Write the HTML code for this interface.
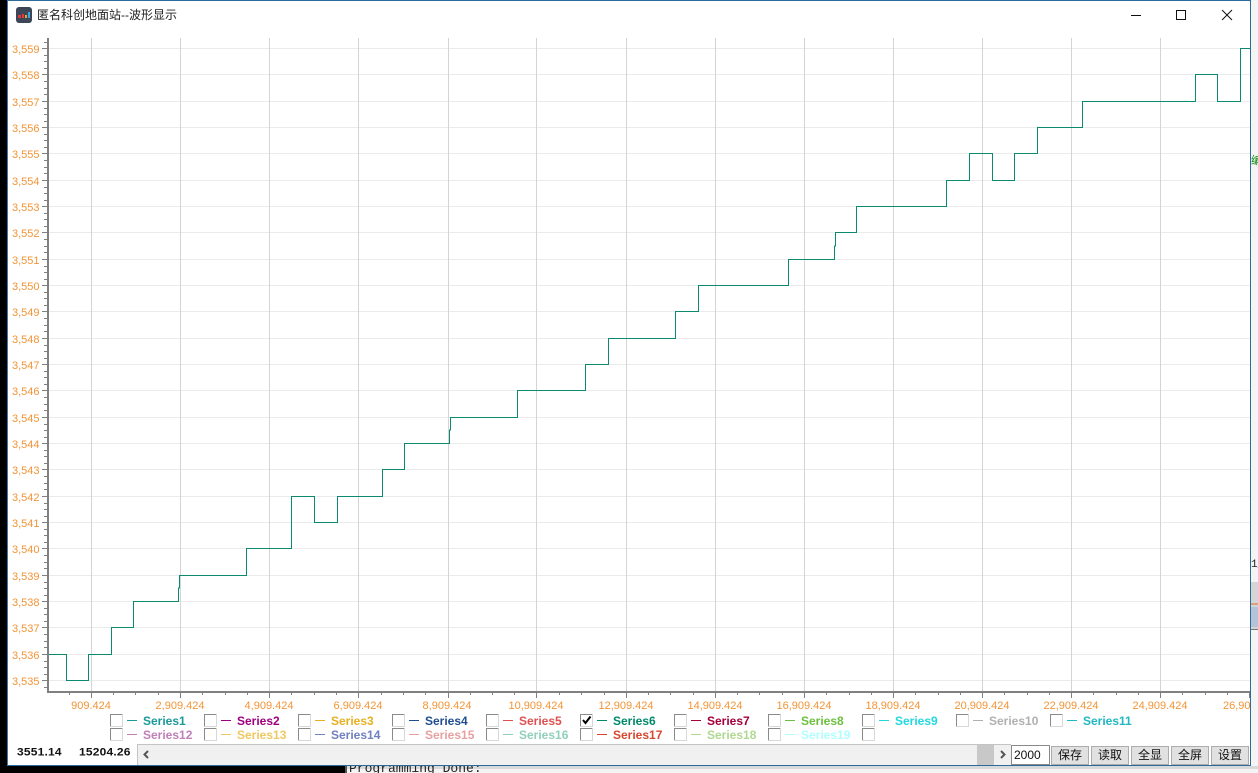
<!DOCTYPE html>
<html><head><meta charset="utf-8"><style>
html,body{margin:0;padding:0;background:#000;width:1258px;height:773px;overflow:hidden}
body{position:relative;font-family:"Liberation Sans","Noto Sans CJK SC",sans-serif}
div,span{position:absolute}
#win{left:7px;top:0;width:1244px;height:766px;background:#fff;box-sizing:border-box;border:1px solid #2c6a9e;border-left-color:#3a78aa}
svg{position:absolute;left:0;top:0}
.btn{top:746px;height:19px;width:38px;box-sizing:border-box;background:#e1e1e1;border:1px solid #adadad;font-size:12px;line-height:17px;text-align:center;color:#111}
</style></head><body>
<div style="left:345px;top:766px;width:913px;height:7px;background:#f4f4f4"></div>
<div style="left:345px;top:766px;width:913px;height:3px;background:#d9d9d9"></div>
<div style="left:345px;top:766px;width:2px;height:7px;background:#555"></div>
<div style="left:349px;top:760px;height:13px;width:300px;overflow:hidden;font:13px/13px 'Liberation Mono',monospace;color:#222;white-space:pre"><span style="top:2px;left:0">Programming Done:</span></div>
<div style="left:1251px;top:0;width:7px;height:766px;background:#f4f4f4"></div>
<div style="left:1251px;top:582px;width:7px;height:48px;background:#d5d5d5"></div>
<div style="left:1251px;top:603px;width:7px;height:2px;background:#d8a27c"></div>
<div style="left:1251px;top:607px;width:7px;height:20px;background:#b4c3d6"></div>
<div style="left:1251px;top:629px;width:7px;height:1px;background:#777"></div>
<div style="left:1251px;top:154px;width:7px;height:12px;font:11px/12px 'Noto Sans CJK SC',sans-serif;color:#0a8a0a;overflow:hidden;white-space:nowrap">编</div>
<div style="left:1251px;top:559px;width:7px;height:12px;font:11px/12px 'Liberation Mono',monospace;color:#222;overflow:hidden">1_</div>
<div id="win"></div>
<svg width="1258" height="773" viewBox="0 0 1258 773" shape-rendering="crispEdges">
<rect x="16" y="7" width="16" height="16" rx="3" fill="#3c4656" shape-rendering="auto"/>
<rect x="18" y="15" width="3" height="3" fill="#e0383c"/><rect x="22" y="14" width="2" height="4" fill="#e0383c"/><rect x="25" y="15" width="2" height="3" fill="#e8a030"/><rect x="28" y="12" width="2" height="6" fill="#38a8e0"/>
<path d="M1131 15.500h10" stroke="#111" fill="none"/>
<rect x="1176.500" y="10.500" width="9" height="9" fill="none" stroke="#111"/>
<path d="M1222 10l10 10M1232 10l-10 10" stroke="#111" fill="none" shape-rendering="auto"/>
<g stroke="#ebebeb" fill="none">
<path d="M48 48.500H1250M48 74.500H1250M48 101.500H1250M48 127.500H1250M48 153.500H1250M48 180.500H1250M48 206.500H1250M48 232.500H1250M48 259.500H1250M48 285.500H1250M48 311.500H1250M48 338.500H1250M48 364.500H1250M48 390.500H1250M48 417.500H1250M48 443.500H1250M48 469.500H1250M48 496.500H1250M48 522.500H1250M48 548.500H1250M48 575.500H1250M48 601.500H1250M48 627.500H1250M48 654.500H1250M48 680.500H1250"/>
</g>
<g stroke="#d4d4d4" fill="none">
<path d="M91.500 38V691M180.500 38V691M269.500 38V691M358.500 38V691M448.500 38V691M536.500 38V691M626.500 38V691M715.500 38V691M804.500 38V691M893.500 38V691M982.500 38V691M1071.500 38V691M1160.500 38V691"/>
</g>
<path d="M49 654.500H66.500V680.500H88.500V654.500H111.500V627.500H133.500V601.500H178.500V588H179.500V575.500H246.500V548.500H291.500V496.500H314.500V522.500H337.500V496.500H382.500V469.500H404.500V443.500H449.500V430H450.500V417.500H517.500V390.500H585.500V364.500H608.500V338.500H675.500V311.500H698.500V285.500H788.500V259.500H834.500V246H835.500V232.500H856.500V206.500H946.500V180.500H969.500V153.500H992.500V180.500H1014.500V153.500H1037.500V127.500H1082.500V101.500H1195.500V74.500H1217.500V101.500H1240.500V48.500H1250" fill="none" stroke="#0b8a70"/>
<rect x="47" y="38" width="2" height="655" fill="#808080"/>
<rect x="47" y="691" width="1203" height="2" fill="#808080"/>
<path d="M44 42.500H47M44 55.500H47M44 61.500H47M44 68.500H47M44 81.500H47M44 88.500H47M44 94.500H47M44 108.500H47M44 114.500H47M44 121.500H47M44 134.500H47M44 140.500H47M44 147.500H47M44 160.500H47M44 167.500H47M44 173.500H47M44 187.500H47M44 193.500H47M44 200.500H47M44 213.500H47M44 219.500H47M44 226.500H47M44 239.500H47M44 246.500H47M44 252.500H47M44 266.500H47M44 272.500H47M44 279.500H47M44 292.500H47M44 298.500H47M44 305.500H47M44 318.500H47M44 325.500H47M44 331.500H47M44 345.500H47M44 351.500H47M44 358.500H47M44 371.500H47M44 377.500H47M44 384.500H47M44 397.500H47M44 404.500H47M44 410.500H47M44 424.500H47M44 430.500H47M44 437.500H47M44 450.500H47M44 456.500H47M44 463.500H47M44 476.500H47M44 483.500H47M44 489.500H47M44 503.500H47M44 509.500H47M44 516.500H47M44 529.500H47M44 535.500H47M44 542.500H47M44 555.500H47M44 562.500H47M44 568.500H47M44 582.500H47M44 588.500H47M44 595.500H47M44 608.500H47M44 614.500H47M44 621.500H47M44 634.500H47M44 641.500H47M44 647.500H47M44 661.500H47M44 667.500H47M44 674.500H47M44 687.500H47" stroke="#808080" fill="none"/>
<path d="M42 48.500H47M42 74.500H47M42 101.500H47M42 127.500H47M42 153.500H47M42 180.500H47M42 206.500H47M42 232.500H47M42 259.500H47M42 285.500H47M42 311.500H47M42 338.500H47M42 364.500H47M42 390.500H47M42 417.500H47M42 443.500H47M42 469.500H47M42 496.500H47M42 522.500H47M42 548.500H47M42 575.500H47M42 601.500H47M42 627.500H47M42 654.500H47M42 680.500H47" stroke="#808080" fill="none"/>
<path d="M69.500 693V695M113.500 693V695M135.500 693V695M158.500 693V695M202.500 693V695M225.500 693V695M247.500 693V695M291.500 693V695M314.500 693V695M336.500 693V695M381.500 693V695M403.500 693V695M425.500 693V695M470.500 693V695M492.500 693V695M514.500 693V695M559.500 693V695M581.500 693V695M604.500 693V695M648.500 693V695M670.500 693V695M693.500 693V695M737.500 693V695M759.500 693V695M782.500 693V695M826.500 693V695M849.500 693V695M871.500 693V695M915.500 693V695M938.500 693V695M960.500 693V695M1004.500 693V695M1027.500 693V695M1049.500 693V695M1093.500 693V695M1116.500 693V695M1138.500 693V695M1182.500 693V695M1205.500 693V695M1227.500 693V695" stroke="#808080" fill="none"/>
<path d="M91.500 693V698M180.500 693V698M269.500 693V698M358.500 693V698M448.500 693V698M536.500 693V698M626.500 693V698M715.500 693V698M804.500 693V698M893.500 693V698M982.500 693V698M1071.500 693V698M1160.500 693V698M1249.500 693V698" stroke="#808080" fill="none"/>
<g font-family="'Liberation Sans',sans-serif" font-size="11" fill="#f39436" shape-rendering="auto">
<text x="12" y="53">3,559</text><text x="12" y="79">3,558</text><text x="12" y="106">3,557</text><text x="12" y="132">3,556</text><text x="12" y="158">3,555</text><text x="12" y="185">3,554</text><text x="12" y="211">3,553</text><text x="12" y="237">3,552</text><text x="12" y="264">3,551</text><text x="12" y="290">3,550</text><text x="12" y="316">3,549</text><text x="12" y="343">3,548</text><text x="12" y="369">3,547</text><text x="12" y="395">3,546</text><text x="12" y="422">3,545</text><text x="12" y="448">3,544</text><text x="12" y="474">3,543</text><text x="12" y="501">3,542</text><text x="12" y="527">3,541</text><text x="12" y="553">3,540</text><text x="12" y="580">3,539</text><text x="12" y="606">3,538</text><text x="12" y="632">3,537</text><text x="12" y="659">3,536</text><text x="12" y="685">3,535</text>
<g text-anchor="middle"><text x="91" y="709">909.424</text><text x="180" y="709">2,909.424</text><text x="269" y="709">4,909.424</text><text x="358" y="709">6,909.424</text><text x="447" y="709">8,909.424</text><text x="536" y="709">10,909.424</text><text x="626" y="709">12,909.424</text><text x="715" y="709">14,909.424</text><text x="804" y="709">16,909.424</text><text x="893" y="709">18,909.424</text><text x="982" y="709">20,909.424</text><text x="1071" y="709">22,909.424</text><text x="1160" y="709">24,909.424</text></g>
</g>
<rect x="1223" y="698" width="27" height="14" fill="#fff"/>
<text x="1223" y="709" font-family="'Liberation Sans',sans-serif" font-size="11" fill="#f39436" shape-rendering="auto">26,90</text>
<g fill="#fff" stroke="#8a8a8a">
<path d="M110.500 726.500V714.500H122.500" fill="none"/><path d="M204.500 726.500V714.500H216.500" fill="none"/><path d="M298.500 726.500V714.500H310.500" fill="none"/><path d="M392.500 726.500V714.500H404.500" fill="none"/><path d="M486.500 726.500V714.500H498.500" fill="none"/><path d="M580.500 726.500V714.500H592.500" fill="none"/><path d="M674.500 726.500V714.500H686.500" fill="none"/><path d="M768.500 726.500V714.500H780.500" fill="none"/><path d="M862.500 726.500V714.500H874.500" fill="none"/><path d="M956.500 726.500V714.500H968.500" fill="none"/><path d="M1050.500 726.500V714.500H1062.500" fill="none"/>
<path d="M110.500 740.500V728.500H122.500" fill="none"/><path d="M204.500 740.500V728.500H216.500" fill="none"/><path d="M298.500 740.500V728.500H310.500" fill="none"/><path d="M392.500 740.500V728.500H404.500" fill="none"/><path d="M486.500 740.500V728.500H498.500" fill="none"/><path d="M580.500 740.500V728.500H592.500" fill="none"/><path d="M674.500 740.500V728.500H686.500" fill="none"/><path d="M768.500 740.500V728.500H780.500" fill="none"/><path d="M862.500 740.500V728.500H874.500" fill="none"/>
</g>
<g fill="none" stroke="#d8d8d8">
<path d="M110.500 726.500H122.500V714.500M204.500 726.500H216.500V714.500M298.500 726.500H310.500V714.500M392.500 726.500H404.500V714.500M486.500 726.500H498.500V714.500M580.500 726.500H592.500V714.500M674.500 726.500H686.500V714.500M768.500 726.500H780.500V714.500M862.500 726.500H874.500V714.500M956.500 726.500H968.500V714.500M1050.500 726.500H1062.500V714.500"/>
<path d="M110.500 740.500H122.500V728.500M204.500 740.500H216.500V728.500M298.500 740.500H310.500V728.500M392.500 740.500H404.500V728.500M486.500 740.500H498.500V728.500M580.500 740.500H592.500V728.500M674.500 740.500H686.500V728.500M768.500 740.500H780.500V728.500M862.500 740.500H874.500V728.500"/>
</g>
<path d="M583 720l2.500 3 5-6.500" fill="none" stroke="#000" stroke-width="2" shape-rendering="auto"/>
<g fill="none">
<path d="M127 720.500h10" stroke="#1a9a9a"/><path d="M221 720.500h10" stroke="#a0007f"/><path d="M315 720.500h10" stroke="#e8b020"/><path d="M409 720.500h10" stroke="#1f4e8f"/><path d="M503 720.500h10" stroke="#e05050"/><path d="M597 720.500h10" stroke="#00886b"/><path d="M691 720.500h10" stroke="#a5003c"/><path d="M785 720.500h10" stroke="#6cc040"/><path d="M879 720.500h10" stroke="#20d8e0"/><path d="M973 720.500h10" stroke="#b0b0b0"/><path d="M1067 720.500h10" stroke="#20b8c0"/>
<path d="M127 734.500h10" stroke="#c080b8"/><path d="M221 734.500h10" stroke="#f0c860"/><path d="M315 734.500h10" stroke="#7080c0"/><path d="M409 734.500h10" stroke="#e8a0a0"/><path d="M503 734.500h10" stroke="#90d0b8"/><path d="M597 734.500h10" stroke="#d84830"/><path d="M691 734.500h10" stroke="#b0d890"/><path d="M785 734.500h10" stroke="#b0ffff"/>
</g>
<g font-family="'Liberation Sans',sans-serif" font-size="12" font-weight="bold" shape-rendering="auto">
<text x="143" y="725" fill="#1a9a9a">Series1</text><text x="237" y="725" fill="#a0007f">Series2</text><text x="331" y="725" fill="#e8b020">Series3</text><text x="425" y="725" fill="#1f4e8f">Series4</text><text x="519" y="725" fill="#e05050">Series5</text><text x="613" y="725" fill="#00886b">Series6</text><text x="707" y="725" fill="#a5003c">Series7</text><text x="801" y="725" fill="#6cc040">Series8</text><text x="895" y="725" fill="#20d8e0">Series9</text><text x="989" y="725" fill="#b0b0b0">Series10</text><text x="1083" y="725" fill="#20b8c0">Series11</text>
<text x="143" y="739" fill="#c080b8">Series12</text><text x="237" y="739" fill="#f0c860">Series13</text><text x="331" y="739" fill="#7080c0">Series14</text><text x="425" y="739" fill="#e8a0a0">Series15</text><text x="519" y="739" fill="#90d0b8">Series16</text><text x="613" y="739" fill="#d84830">Series17</text><text x="707" y="739" fill="#b0d890">Series18</text><text x="801" y="739" fill="#b0ffff">Series19</text>
</g>
<rect x="138" y="745" width="873" height="20" fill="#f0f0f0"/>
<path d="M138 744.500H1011M137.500 744V765" stroke="#c4c4c4" fill="none"/>
<rect x="977" y="745" width="17" height="20" fill="#c8c8c8"/>
<path d="M148 751l-3.500 3.500 3.500 3.500" fill="none" stroke="#555" stroke-width="2" shape-rendering="auto"/>
<path d="M1001 751l3.500 3.500-3.500 3.500" fill="none" stroke="#555" stroke-width="2" shape-rendering="auto"/>
<rect x="1011.500" y="745.500" width="38" height="19" fill="#fff" stroke="#8a8a8a"/>
</svg>
<div style="left:37px;top:7px;font-size:12px;line-height:17px;color:#222;white-space:nowrap">匿名科创地面站--波形显示</div>
<div style="left:17px;top:745px;font-size:12px;line-height:15px;font-weight:bold;color:#111;white-space:nowrap;letter-spacing:.2px;transform-origin:0 50%;transform:scaleY(.9)">3551.14</div>
<div style="left:79px;top:745px;font-size:12px;line-height:15px;font-weight:bold;color:#111;white-space:nowrap;letter-spacing:.2px;transform-origin:0 50%;transform:scaleY(.9)">15204.26</div>
<div style="left:1014px;top:748px;font-size:12px;line-height:14px;color:#111">2000</div>
<div class="btn" style="left:1051px">保存</div>
<div class="btn" style="left:1091px">读取</div>
<div class="btn" style="left:1131px">全显</div>
<div class="btn" style="left:1171px">全屏</div>
<div class="btn" style="left:1211px">设置</div>
</body></html>
